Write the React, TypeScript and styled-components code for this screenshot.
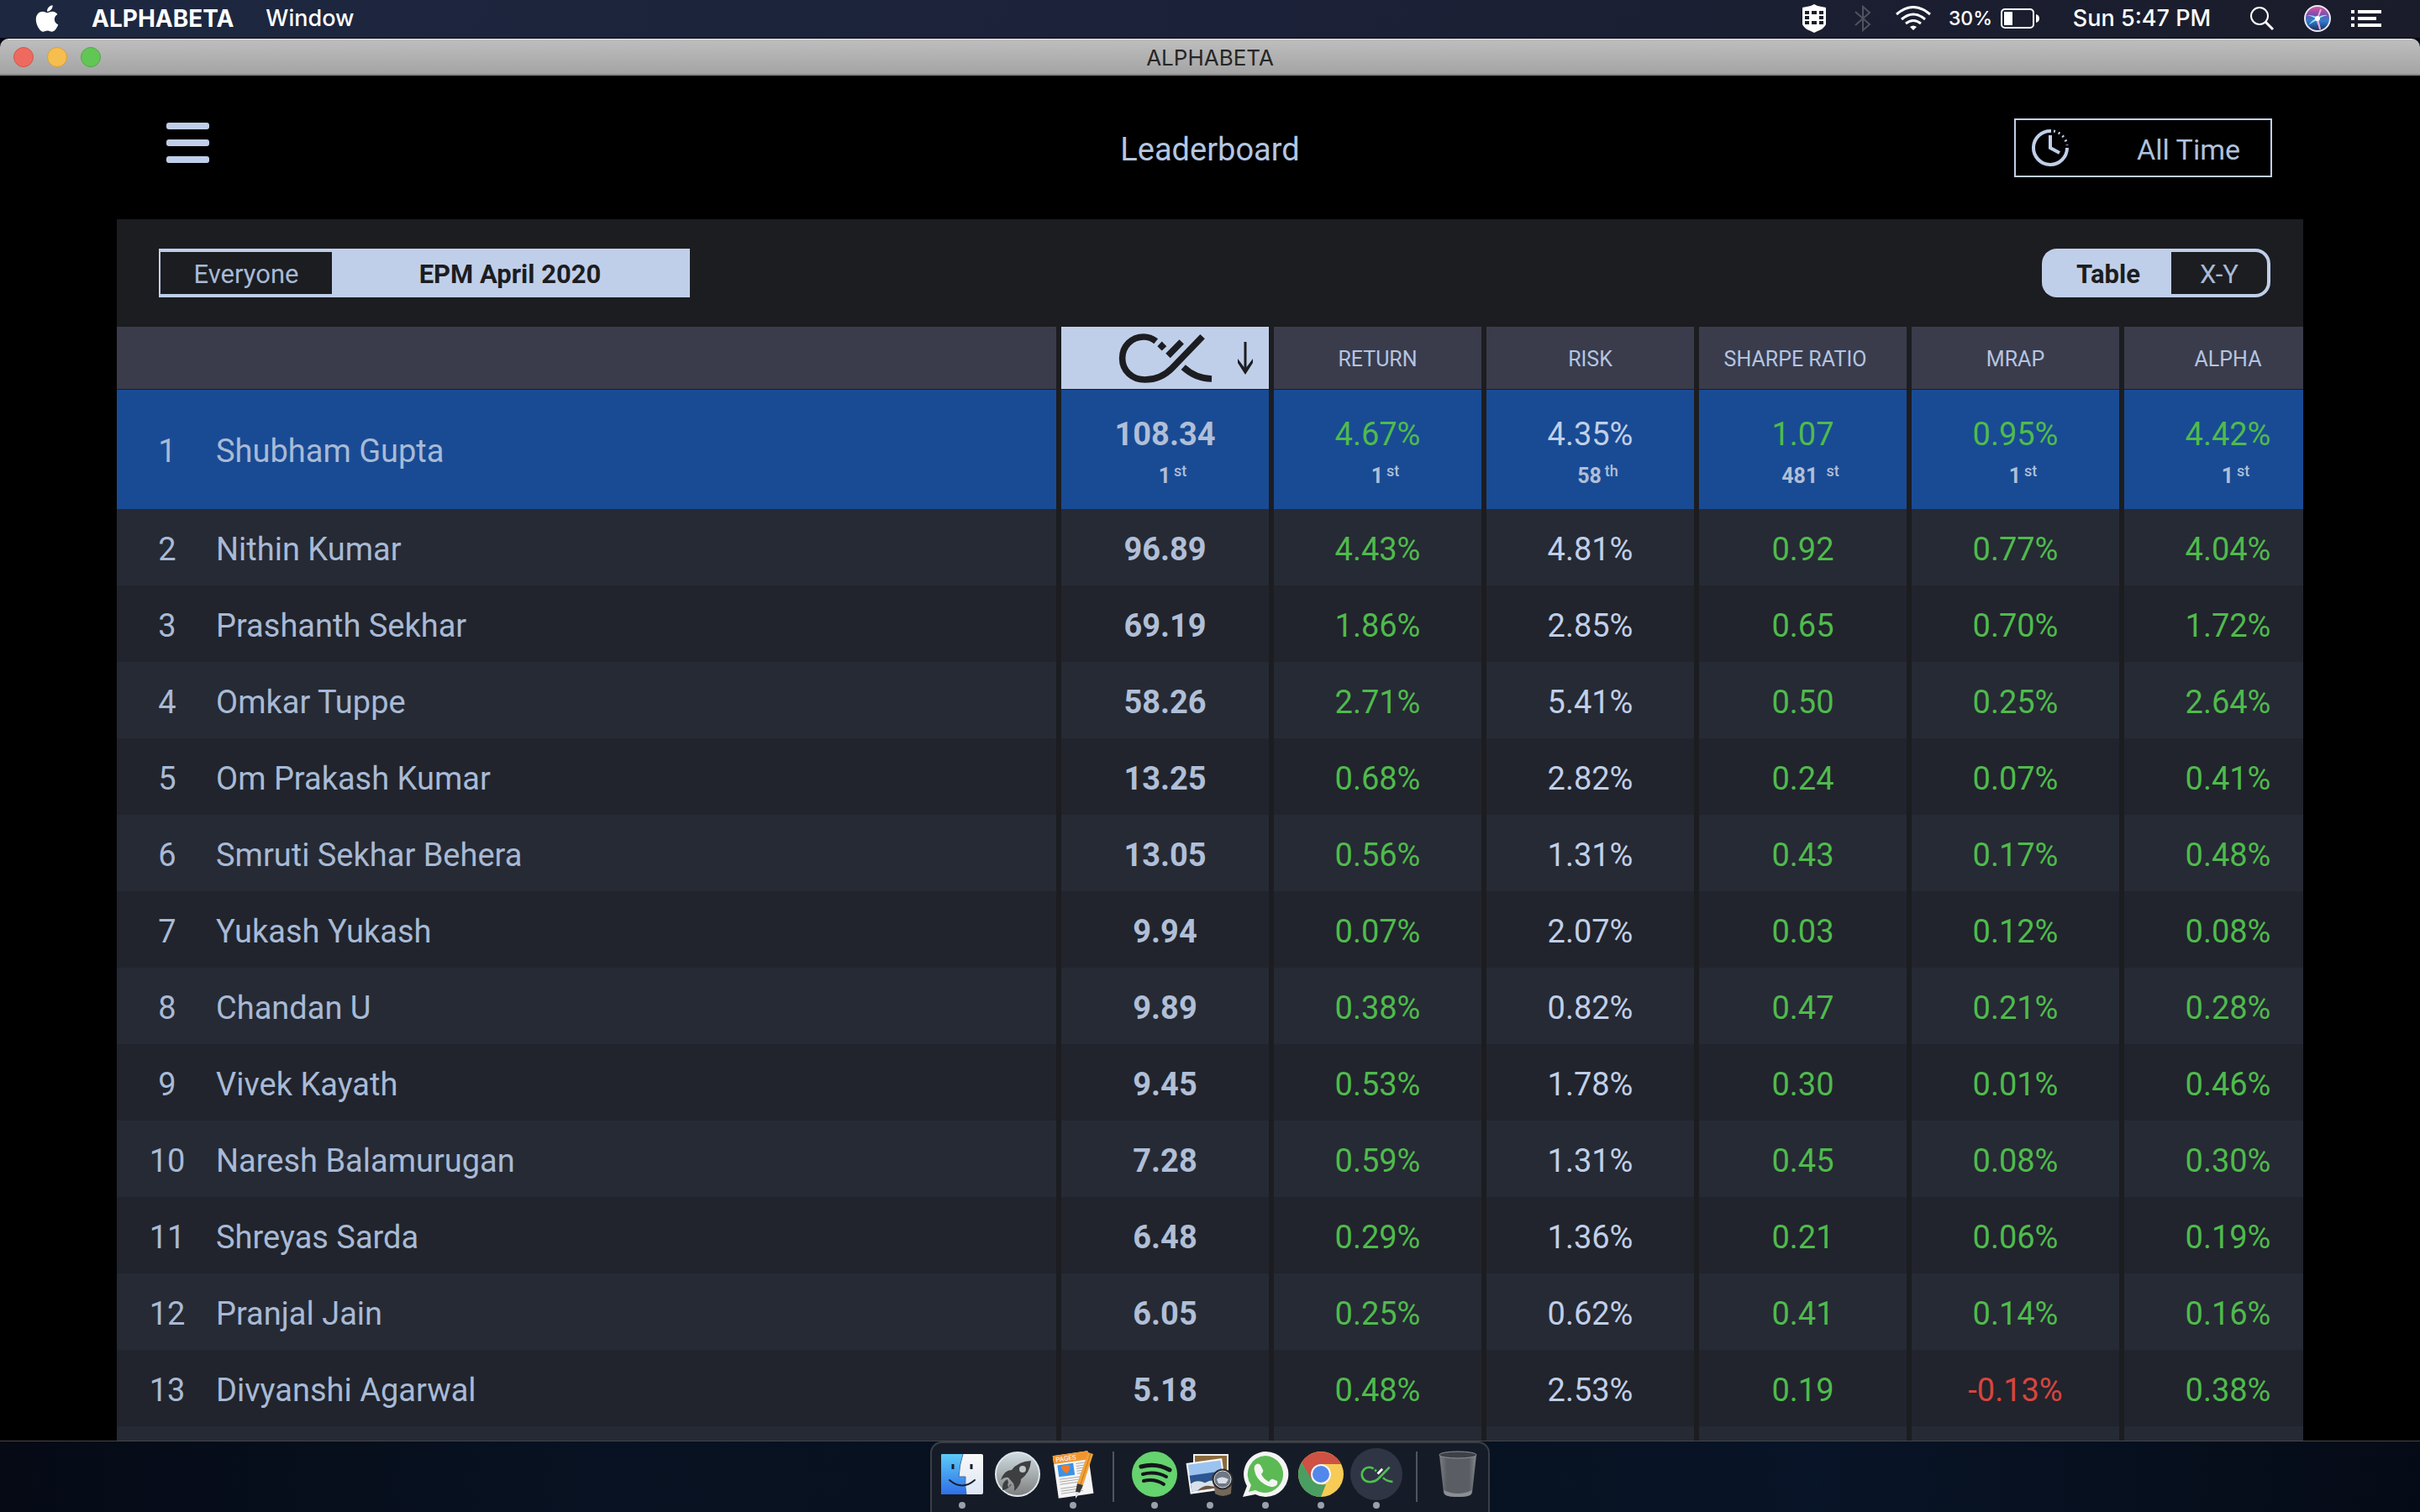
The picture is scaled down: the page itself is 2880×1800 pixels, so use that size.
import React, { useState } from "react";
import styled, { createGlobalStyle, css } from "styled-components";
import { FaApple } from "react-icons/fa";

const color = {
  ice: "#c0cfe9",
  name: "#a8bad6",
  ink: "#1c1d21",
  head: "#3a3c4c",
  even: "#262a34",
  odd: "#21242c",
  me: "#194b94",
  green: "#4fbb4c",
  red: "#d8443f",
};

const GlobalStyle = createGlobalStyle`
  * { box-sizing: border-box; }
  body { margin: 0; background: #070d1a; }
  button { font: inherit; margin: 0; padding: 0; border: 0; background: none; cursor: pointer; }
`;

const Desktop = styled.div`
  display: flex;
  flex-direction: column;
  height: 100vh;
  overflow: hidden;
  background: linear-gradient(90deg, #050a15, #081222 25%, #06101d 50%, #081427 75%, #050b16);
  font-family: Roboto, "Liberation Sans", sans-serif;
`;

/* ---------- menu bar ---------- */

const MenuBar = styled.header`
  display: flex;
  align-items: center;
  justify-content: space-between;
  flex: none;
  height: 46px;
  padding: 0 39px 2px 41px;
  border-bottom: 1px solid #03060f;
  background: linear-gradient(90deg, #1d2840, #1b2138 50%, #1a1c2a);
  color: #fff;
  font-family: Inter, "Liberation Sans", sans-serif;
  font-size: 27px;
  line-height: 32px;
`;

const MenuLeft = styled.nav`
  display: flex;
  align-items: center;
  gap: 38px;
`;

const MenuButton = styled.button<{ $bold?: boolean }>`
  display: flex;
  color: #fff;
  font-size: ${(p) => (p.$bold ? 28 : 27)}px;
  font-weight: ${(p) => (p.$bold ? 700 : 500)};
`;

const AppleIcon = styled(FaApple)`
  width: 30px;
  height: 36px;
`;

const MenuRight = styled.div`
  display: flex;
  align-items: center;
`;

const Status = styled.div<{ $width: number }>`
  display: flex;
  align-items: center;
  justify-content: center;
  gap: 10px;
  width: ${(p) => p.$width}px;
  font-weight: 500;
  white-space: nowrap;
`;

const Charge = styled.span`
  font-size: 23px;
`;

/* ---------- window ---------- */

const Window = styled.section`
  display: flex;
  flex-direction: column;
  flex: 1;
  min-height: 0;
  overflow: hidden;
  border-bottom: 1px solid #44464b;
  border-radius: 10px 10px 0 0;
  background: #000;
`;

const TitleBar = styled.div`
  display: grid;
  grid-template-columns: 1fr auto 1fr;
  align-items: center;
  flex: none;
  height: 44px;
  padding: 0 16px;
  border-top: 1px solid #ececec;
  border-bottom: 2px solid #868686;
  background: linear-gradient(#bebebe, #a4a4a4);
`;

const Lights = styled.div`
  display: flex;
  gap: 16px;
`;

const Light = styled.button<{ $fill: string; $edge: string }>`
  width: 24px;
  height: 24px;
  border: 1px solid ${(p) => p.$edge};
  border-radius: 50%;
  background: ${(p) => p.$fill};
`;

const WindowTitle = styled.span`
  padding-top: 2px;
  color: #262626;
  font-family: Inter, "Liberation Sans", sans-serif;
  font-size: 26px;
  line-height: 32px;
`;

const AppHeader = styled.div`
  display: grid;
  grid-template-columns: 1fr auto 1fr;
  align-items: center;
  flex: none;
  height: 171px;
  padding: 0 176px;
`;

const Burger = styled.button`
  display: flex;
  flex-direction: column;
  gap: 12px;
  width: 51px;
  margin: 0 0 12px 22px;
`;

const BurgerBar = styled.span`
  height: 8px;
  border-radius: 3px;
  background: ${color.ice};
`;

const PageTitle = styled.h1`
  margin: 0;
  padding-top: 4px;
  color: #b5c6e2;
  font-size: 38px;
  font-weight: 400;
  line-height: 48px;
`;

const PeriodButton = styled.button`
  display: flex;
  align-items: center;
  justify-content: space-between;
  justify-self: end;
  width: 307px;
  height: 70px;
  padding: 0 36px 0 18px;
  border: 2px solid ${color.ice};
  color: #b0c1dd;
  font-size: 34px;
  font-weight: 400;
  line-height: 44px;
`;

const PeriodLabel = styled.span`
  padding-top: 4px;
`;

const Panel = styled.main`
  flex: 1;
  min-height: 0;
  margin: 0 139px;
  overflow: hidden;
  background: ${color.ink};
`;

const Toolbar = styled.div`
  display: flex;
  align-items: center;
  justify-content: space-between;
  height: 128px;
  padding: 0 39px 0 50px;
`;

const Segments = styled.div<{ $round?: boolean }>`
  display: flex;
  height: 58px;
  padding: 4px ${(p) => (p.$round ? 4 : 2)}px;
  border-radius: ${(p) => (p.$round ? 18 : 0)}px;
  background: ${color.ice};
  overflow: hidden;
`;

const Segment = styled.button<{ $on: boolean; $width: number; $roundEnd?: boolean }>`
  width: ${(p) => p.$width}px;
  padding-top: 4px;
  border-radius: ${(p) => (p.$roundEnd ? "0 14px 14px 0" : "0")};
  background: ${(p) => (p.$on ? color.ice : color.ink)};
  color: ${(p) => (p.$on ? color.ink : color.name)};
  font-size: 31px;
  font-weight: ${(p) => (p.$on ? 700 : 400)};
  line-height: 40px;
`;

/* ---------- table ---------- */

const Table = styled.table`
  width: 100%;
  table-layout: fixed;
  border-collapse: separate;
  border-spacing: 0;
`;

const Col = styled.col<{ $width?: number }>`
  width: ${(p) => (p.$width ? p.$width + "px" : "auto")};
`;

const cell = css`
  padding: 4px 0 0;
  border-left: 6px solid ${color.ink};
  text-align: center;
  &:first-child {
    border-left: 0;
    text-align: left;
  }
  &:last-child {
    padding-left: 34px;
  }
`;

const Th = styled.th<{ $lit?: boolean; $pull?: boolean }>`
  ${cell}
  height: 75px;
  padding-top: ${(p) => (p.$lit ? 0 : 4)}px;
  padding-right: ${(p) => (p.$pull ? 18 : 0)}px;
  border-bottom: 1px solid ${color.ink};
  background: ${(p) => (p.$lit ? color.ice : color.head)};
  color: #b4c5e1;
  font-size: 25px;
  font-weight: 400;
  line-height: 32px;
`;

const SortButton = styled.button`
  display: grid;
  grid-template-columns: 1fr auto 1fr;
  align-items: center;
  width: 100%;
  padding: 0 18px;
`;

const SortArrow = styled.svg`
  justify-self: end;
`;

const Row = styled.tr<{ $me?: boolean }>`
  height: ${(p) => (p.$me ? 142 : 91)}px;
  background: ${color.odd};
  &:nth-child(even) {
    background: ${color.even};
  }
  ${(p) => p.$me && css`
    && { background: ${color.me}; }
  `}
`;

const Td = styled.td<{ $tone: "score" | "plain" | "up" | "down" | "name" }>`
  ${cell}
  font-size: 38px;
  font-weight: ${(p) => (p.$tone === "score" ? 700 : 400)};
  line-height: 48px;
  color: ${(p) =>
    ({ score: "#b0bfd7", plain: color.ice, up: color.green, down: color.red, name: color.name })[p.$tone]};
`;

const Person = styled.div`
  display: flex;
  gap: 28px;
  padding-left: 30px;
`;

const Rank = styled.span`
  width: 60px;
  text-align: center;
`;

const Place = styled.div`
  display: flex;
  justify-content: center;
  gap: 4px;
  padding: 12px 0 0 18px;
  color: #b0bfd7;
  font-size: 25px;
  font-weight: 700;
  line-height: 28px;
  white-space: pre;
`;

const Ordinal = styled.span`
  font-size: 18px;
  font-weight: 500;
  line-height: 16px;
`;

/* ---------- dock ---------- */

const Dock = styled.footer`
  display: flex;
  align-self: center;
  flex: none;
  height: 84px;
  padding: 0 3px;
  border: 2px solid #3a3e47;
  border-bottom: 0;
  border-radius: 14px 14px 0 0;
  background: #161c27;
`;

const DockItem = styled.button<{ $running?: boolean }>`
  display: flex;
  flex-direction: column;
  align-items: center;
  justify-content: space-between;
  width: 66px;
  height: 82px;
  padding: 6px 0 4px;
  &::after {
    content: "";
    width: 8px;
    height: 8px;
    border-radius: 50%;
    background: ${(p) => (p.$running ? "#9aa0ad" : "transparent")};
  }
`;

const DockRule = styled.div`
  width: 2px;
  height: 60px;
  margin: 10px 15px 10px 14px;
  background: #50555f;
`;

/* ---------- drawings ---------- */

function AlphaMark({ width, ink, accent }: { width: number; ink: string; accent: string }) {
  return (
    <svg width={width} height={Math.round((width * 61) / 112)} viewBox="240 48 336 184" fill="none" stroke={ink} strokeWidth="23">
      <path d="M374 79C360 68 345 63 330 63C287 63 253 96 253 140C253 184 288 217 334 217C375 217 405 203 432 175L541 62" />
      <path d="M472 172C500 198 535 213 574 214" />
      <path d="M417 131L466 81" stroke={accent} />
      <path d="M395 80L412 97L395 113L379 97Z" fill={ink} stroke="none" />
    </svg>
  );
}

const Clock = () => (
  <svg width="46" height="46" viewBox="0 0 46 46" fill="none" stroke={color.ice}>
    <path d="M24 3A20 20 0 1 0 43 23" strokeWidth="4" />
    <path d="M27 3A20 20 0 0 1 43 20" strokeWidth="3" strokeDasharray="2 4" />
    <path d="M23 8V23L34 29" strokeWidth="4" />
  </svg>
);

const Shield = () => (
  <svg width="28" height="34" viewBox="0 0 28 34">
    <path d="M0 4L10 2L14 0L18 2L28 4V24Q26 29 18 32L14 34L10 32Q2 29 0 24Z" fill="#fff" />
    <path d="M3 8h5v4H3zM11 8h6v4h-6zM20 8h5v4h-5zM3 14h5v4H3zM20 14h5v4h-5zM3 20h5v4H3zM11 20h6v4h-6zM20 20h5v4h-5z" fill="#1a1d2c" />
  </svg>
);

const Bluetooth = () => (
  <svg width="20" height="32" viewBox="0 0 20 32" fill="none" stroke="#50535f" strokeWidth="2">
    <path d="M1 8L18 23L10 30V2L18 9L1 24" />
  </svg>
);

const Wifi = () => (
  <svg width="42" height="30" viewBox="0 0 42 30" fill="none" stroke="#fff" strokeWidth="3">
    <path d="M1 10Q21 -7 41 10M7 16Q21 4 35 16M12 21Q21 14 30 21" />
    <path d="M17 25Q21 22 25 25L21 29Z" fill="#fff" stroke="none" />
  </svg>
);

const Battery = () => (
  <svg width="46" height="24" viewBox="0 0 46 24">
    <rect x="1" y="1" width="38" height="22" rx="4" fill="none" stroke="#fff" strokeWidth="2" />
    <rect x="4" y="4" width="10" height="16" fill="#fff" />
    <path d="M42 7Q46 8 46 12T42 17Z" fill="#fff" />
  </svg>
);

const Search = () => (
  <svg width="30" height="30" viewBox="0 0 30 30" fill="none" stroke="#fff" strokeWidth="2">
    <circle cx="12" cy="12" r="10" />
    <path d="M19 19L28 28" strokeWidth="3" />
  </svg>
);

const Siri = () => (
  <svg width="32" height="32" viewBox="0 0 32 32">
    <defs>
      <linearGradient id="siri" x1="0" y1="0" x2="0" y2="1">
        <stop offset="0" stopColor="#e0549b" />
        <stop offset="0.35" stopColor="#7a4fae" />
        <stop offset="0.6" stopColor="#2f7fd0" />
        <stop offset="1" stopColor="#1f2456" />
      </linearGradient>
    </defs>
    <circle cx="16" cy="16" r="15" fill="url(#siri)" stroke="#e8e8f2" strokeWidth="2" />
    <path d="M3 12Q12 12 16 15Q22 11 28 12Q20 14 17 17Q18 24 20 29Q15 22 15 18Q9 21 5 24Q10 18 14 16Q9 13 3 12Z" fill="#8ff0f2" />
    <path d="M16 16L19 29M16 16L20 5" stroke="#f3a8d4" strokeWidth="2" />
    <circle cx="16" cy="16" r="3" fill="#fff" />
  </svg>
);

const ListIcon = () => (
  <svg width="36" height="20" viewBox="0 0 36 20" fill="#fff">
    <path d="M0 0h4v4H0zM8 0h28v4H8zM0 8h4v4H0zM8 8h22v4H8zM0 16h4v4H0zM8 16h28v4H8z" />
  </svg>
);

const Finder = () => (
  <svg width="62" height="62" viewBox="0 0 62 62">
    <defs>
      <linearGradient id="fl" x1="0" y1="0" x2="0" y2="1">
        <stop offset="0" stopColor="#5ccbf8" />
        <stop offset="1" stopColor="#2f6fe8" />
      </linearGradient>
      <linearGradient id="fr" x1="0" y1="0" x2="0" y2="1">
        <stop offset="0" stopColor="#f8f8f8" />
        <stop offset="1" stopColor="#dde6f4" />
      </linearGradient>
    </defs>
    <rect x="6" y="7" width="50" height="48" rx="2" fill="url(#fr)" />
    <path d="M8 7H32Q28 19 27 34H35Q34 45 36 55H8Q6 55 6 53V9Q6 7 8 7Z" fill="url(#fl)" />
    <path d="M20 19v6M42 19v6" stroke="#14202f" strokeWidth="3" />
    <path d="M32 7Q28 19 27 34H35Q34 45 36 55" fill="none" stroke="#3c6da8" strokeWidth="1" />
    <path d="M16 38Q31 51 46 38" fill="none" stroke="#14202f" strokeWidth="2" strokeLinecap="round" />
  </svg>
);

const Launchpad = () => (
  <svg width="62" height="62" viewBox="0 0 62 62">
    <defs>
      <linearGradient id="lp" x1="0" y1="0" x2="0" y2="1">
        <stop offset="0" stopColor="#cfdde2" />
        <stop offset="1" stopColor="#7e7e7e" />
      </linearGradient>
    </defs>
    <circle cx="31" cy="31" r="26" fill="url(#lp)" stroke="#dfe6e9" strokeWidth="2" />
    <path d="M47 15Q31 16 24 26Q15 26 11 38Q16 34 20 35L26 42Q28 46 27 51Q35 44 35 37Q46 29 47 15Z" fill="#3d3f41" />
    <path d="M19 37Q12 40 13 50Q20 49 24 43Q21 43 21 47Q18 45 20 41Z" fill="#3d3f41" />
    <circle cx="37" cy="25" r="4" fill="#bcc4c8" />
  </svg>
);

const Pages = () => (
  <svg width="62" height="62" viewBox="0 0 62 62">
    <g transform="rotate(-8 31 31)">
      <rect x="10" y="6" width="42" height="51" fill="#f5f5f5" />
      <rect x="10" y="6" width="42" height="10" fill="#f0962f" />
      <text x="13" y="14" fontSize="8" fontFamily="Roboto, sans-serif" fill="#fff">PAGES</text>
      <rect x="14" y="18" width="19" height="14" fill="#3a93e6" />
      <path d="M18 20Q23 18 29 20Q28 26 24 29Q19 26 18 20Z" fill="#ef7b28" />
      <path d="M36 19h12M36 22h12M36 25h11M36 28h11M36 31h10M14 35h30M14 38h30M14 41h29M14 46h26M14 49h26M14 52h26" stroke="#a9a9a9" strokeWidth="1" />
    </g>
    <path d="M49 5L55 7L43 44L36 42Z" fill="#f2a23a" />
    <path d="M52 6L40 43" stroke="#c8741b" strokeWidth="1" />
    <path d="M36 42L43 44L39 53L34 52Z" fill="#353535" />
    <path d="M34 52L39 53L34 60Z" fill="#dfe3e8" />
  </svg>
);

const Spotify = () => (
  <svg width="62" height="62" viewBox="0 0 62 62" fill="none" stroke="#14161c" strokeLinecap="round">
    <circle cx="31" cy="31" r="27" fill="#65d36e" stroke="none" />
    <path d="M15 22Q33 17 49 26" strokeWidth="5" />
    <path d="M17 31Q32 27 45 34" strokeWidth="4" />
    <path d="M18 39Q31 36 42 43" strokeWidth="4" />
  </svg>
);

const Preview = () => (
  <svg width="62" height="62" viewBox="0 0 62 62">
    <path d="M11 7H53V44H11Z" fill="#f2f2ee" />
    <path d="M13 9H51V42H13Z" fill="#8a6a3c" />
    <g transform="rotate(-8 26 34)">
      <rect x="5" y="15" width="43" height="37" fill="#f7f7f7" />
      <rect x="7" y="17" width="39" height="17" fill="#9cc3f0" />
      <rect x="7" y="30" width="39" height="19" fill="#2d558f" />
      <path d="M7 40Q15 35 24 41Q33 37 46 43V49H7Z" fill="#d8e2ea" />
      <path d="M14 49Q22 43 31 46T46 42V49Z" fill="#6e5440" />
    </g>
    <path d="M35 38H57L56 54Q46 60 37 54Z" fill="#75675a" />
    <circle cx="46" cy="37" r="11" fill="#6e7885" stroke="#2c2c2e" strokeWidth="3" />
    <circle cx="46" cy="37" r="10" fill="none" stroke="#e6e6e6" strokeWidth="1" />
    <path d="M39 37Q45 32 53 37L50 42H41Z" fill="#d7dee6" />
  </svg>
);

const WhatsApp = () => (
  <svg width="62" height="62" viewBox="0 0 62 62">
    <path d="M31 4A27 27 0 1 1 19 55L4 58L9 45A27 27 0 0 1 31 4Z" fill="#f4f4f4" />
    <path d="M31 9A22 22 0 1 1 19 50L11 52L14 44A22 22 0 0 1 31 9Z" fill="#5cba55" />
    <path d="M19 20Q22 17 25 20L28 26Q29 28 26 31Q29 37 35 40Q38 36 40 37L45 39Q46 43 43 45Q38 48 30 43Q20 37 18 27Q17 22 19 20Z" fill="#f4f4f4" />
  </svg>
);

const Chrome = () => (
  <svg width="62" height="62" viewBox="0 0 62 62">
    <circle cx="31" cy="31" r="27" fill="#f6cb56" />
    <path d="M31 31L19 38L8 17A27 27 0 0 1 55 19H31Z" fill="#cf5144" />
    <path d="M8 17L20 37Q26 45 37 43L31 58A27 27 0 0 1 8 17Z" fill="#4a9e62" />
    <circle cx="31" cy="31" r="12" fill="#f4f4f4" />
    <circle cx="31" cy="31" r="10" fill="#5287ec" />
  </svg>
);

const AlphaApp = styled.span`
  display: flex;
  align-items: center;
  justify-content: center;
  width: 62px;
  height: 62px;
  border-radius: 50%;
  background: #2f3545;
`;

const Trash = () => (
  <svg width="62" height="62" viewBox="0 0 62 62">
    <defs>
      <linearGradient id="tr" x1="0" y1="0" x2="1" y2="0">
        <stop offset="0" stopColor="#7b7f84" />
        <stop offset="0.2" stopColor="#5a5e64" />
        <stop offset="0.8" stopColor="#5a5e64" />
        <stop offset="1" stopColor="#858a8f" />
      </linearGradient>
    </defs>
    <path d="M9 8L14 53Q15 58 31 58T48 53L53 8Z" fill="url(#tr)" />
    <path d="M14 50Q31 58 48 50L47 54Q46 58 31 58T15 54Z" fill="#8b8f94" />
    <ellipse cx="31" cy="8" rx="22" ry="4" fill="#3d4147" stroke="#8f9398" strokeWidth="1" />
  </svg>
);

/* ---------- data ---------- */

type Entry = [string, string, string, string, string, string, string];

const entries: Entry[] = [
  ["Shubham Gupta", "108.34", "4.67%", "4.35%", "1.07", "0.95%", "4.42%"],
  ["Nithin Kumar", "96.89", "4.43%", "4.81%", "0.92", "0.77%", "4.04%"],
  ["Prashanth Sekhar", "69.19", "1.86%", "2.85%", "0.65", "0.70%", "1.72%"],
  ["Omkar Tuppe", "58.26", "2.71%", "5.41%", "0.50", "0.25%", "2.64%"],
  ["Om Prakash Kumar", "13.25", "0.68%", "2.82%", "0.24", "0.07%", "0.41%"],
  ["Smruti Sekhar Behera", "13.05", "0.56%", "1.31%", "0.43", "0.17%", "0.48%"],
  ["Yukash Yukash", "9.94", "0.07%", "2.07%", "0.03", "0.12%", "0.08%"],
  ["Chandan U", "9.89", "0.38%", "0.82%", "0.47", "0.21%", "0.28%"],
  ["Vivek Kayath", "9.45", "0.53%", "1.78%", "0.30", "0.01%", "0.46%"],
  ["Naresh Balamurugan", "7.28", "0.59%", "1.31%", "0.45", "0.08%", "0.30%"],
  ["Shreyas Sarda", "6.48", "0.29%", "1.36%", "0.21", "0.06%", "0.19%"],
  ["Pranjal Jain", "6.05", "0.25%", "0.62%", "0.41", "0.14%", "0.16%"],
  ["Divyanshi Agarwal", "5.18", "0.48%", "2.53%", "0.19", "-0.13%", "0.38%"],
];

const places: [string, string][] = [
  ["1", "st"],
  ["1", "st"],
  ["58", "th"],
  ["481 ", "st"],
  ["1", "st"],
  ["1", "st"],
];

const headings = ["RETURN", "RISK", "SHARPE RATIO", "MRAP", "ALPHA"];

function tone(column: number, value: string) {
  if (column === 0) return "score";
  if (column === 2) return "plain";
  return value.startsWith("-") ? "down" : "up";
}

const dockLeft = [
  { label: "Finder", icon: <Finder />, running: true },
  { label: "Launchpad", icon: <Launchpad />, running: false },
  { label: "Pages", icon: <Pages />, running: true },
];

const dockApps = [
  { label: "Spotify", icon: <Spotify /> },
  { label: "Preview", icon: <Preview /> },
  { label: "WhatsApp", icon: <WhatsApp /> },
  { label: "Chrome", icon: <Chrome /> },
  { label: "Alphabeta", icon: <AlphaApp><AlphaMark width={39} ink="#4fc14c" accent="#fff" /></AlphaApp> },
];

export default function App() {
  const [group, setGroup] = useState("EPM April 2020");
  const [view, setView] = useState("Table");

  return (
    <Desktop>
      <GlobalStyle />
      <MenuBar>
        <MenuLeft>
          <MenuButton aria-label="Apple menu"><AppleIcon /></MenuButton>
          <MenuButton $bold>ALPHABETA</MenuButton>
          <MenuButton>Window</MenuButton>
        </MenuLeft>
        <MenuRight>
          <Status $width={56}><Shield /></Status>
          <Status $width={60}><Bluetooth /></Status>
          <Status $width={60}><Wifi /></Status>
          <Status $width={132}><Charge>30%</Charge><Battery /></Status>
          <Status $width={220}>Sun 5:47 PM</Status>
          <Status $width={66}><Search /></Status>
          <Status $width={66}><Siri /></Status>
          <Status $width={50}><ListIcon /></Status>
        </MenuRight>
      </MenuBar>

      <Window>
        <TitleBar>
          <Lights>
            <Light aria-label="Close" $fill="#ef6a5e" $edge="#d5544a" />
            <Light aria-label="Minimise" $fill="#f6be4f" $edge="#d8a03c" />
            <Light aria-label="Zoom" $fill="#62c655" $edge="#4fa942" />
          </Lights>
          <WindowTitle>ALPHABETA</WindowTitle>
        </TitleBar>

        <AppHeader>
          <Burger aria-label="Menu"><BurgerBar /><BurgerBar /><BurgerBar /></Burger>
          <PageTitle>Leaderboard</PageTitle>
          <PeriodButton><Clock /><PeriodLabel>All Time</PeriodLabel></PeriodButton>
        </AppHeader>

        <Panel>
          <Toolbar>
            <Segments>
              <Segment $width={204} $on={group === "Everyone"} onClick={() => setGroup("Everyone")}>Everyone</Segment>
              <Segment $width={424} $on={group === "EPM April 2020"} onClick={() => setGroup("EPM April 2020")}>EPM April 2020</Segment>
            </Segments>
            <Segments $round>
              <Segment $width={150} $on={view === "Table"} onClick={() => setView("Table")}>Table</Segment>
              <Segment $width={114} $roundEnd $on={view === "X-Y"} onClick={() => setView("X-Y")}>X-Y</Segment>
            </Segments>
          </Toolbar>

          <Table>
            <colgroup>
              <Col />
              {headings.map((h) => <Col key={h} $width={253} />)}
              <Col $width={219} />
            </colgroup>
            <thead>
              <tr>
                <Th aria-label="Name" />
                <Th $lit scope="col">
                  <SortButton aria-label="Sort by score">
                    <span />
                    <AlphaMark width={112} ink={color.ink} accent={color.ink} />
                    <SortArrow width="20" height="40" viewBox="0 0 20 40" fill="none" stroke={color.ink} strokeWidth="3">
                      <path d="M10 1V34" />
                      <path d="M1 21L10 33L19 21V26L10 40L1 26Z" fill={color.ink} stroke="none" />
                    </SortArrow>
                  </SortButton>
                </Th>
                {headings.map((h) => <Th key={h} scope="col" $pull={h === "SHARPE RATIO"}>{h}</Th>)}
              </tr>
            </thead>
            <tbody>
              {entries.map(([name, ...values], i) => (
                <Row key={name} $me={i === 0}>
                  <Td $tone="name"><Person><Rank>{i + 1}</Rank>{name}</Person></Td>
                  {values.map((value, c) => (
                    <Td key={c} $tone={tone(c, value)}>
                      {value}
                      {i === 0 && <Place>{places[c][0]}<Ordinal>{places[c][1]}</Ordinal></Place>}
                    </Td>
                  ))}
                </Row>
              ))}
              <Row aria-hidden="true">
                {[0, 1, 2, 3, 4, 5, 6].map((c) => <Td key={c} $tone="plain" />)}
              </Row>
            </tbody>
          </Table>
        </Panel>
      </Window>

      <Dock>
        {dockLeft.map((d) => <DockItem key={d.label} aria-label={d.label} $running={d.running}>{d.icon}</DockItem>)}
        <DockRule />
        {dockApps.map((d) => <DockItem key={d.label} aria-label={d.label} $running>{d.icon}</DockItem>)}
        <DockRule />
        <DockItem aria-label="Bin"><Trash /></DockItem>
      </Dock>
    </Desktop>
  );
}
